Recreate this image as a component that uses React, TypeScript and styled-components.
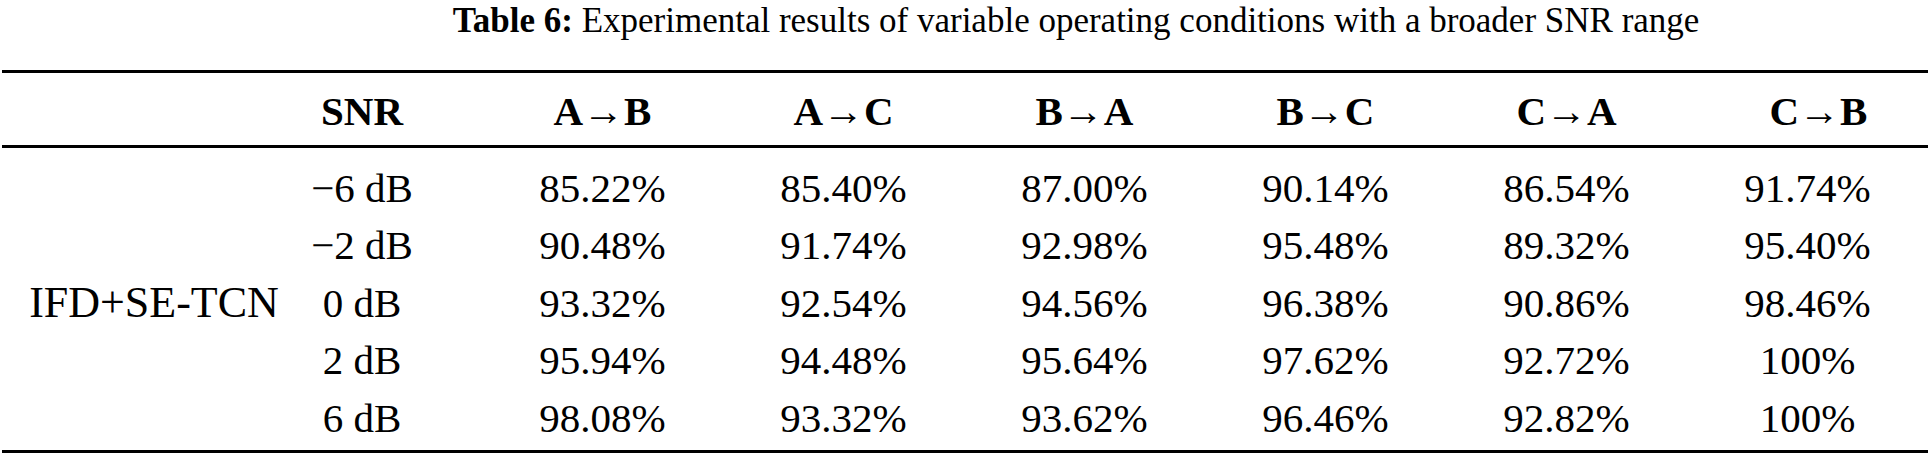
import React from "react";
import styled, { createGlobalStyle } from "styled-components";

const Global = createGlobalStyle`
  html, body { margin: 0; padding: 0; background: #ffffff; }
  body { font-family: "Liberation Serif", "Times New Roman", serif; color: #000; }
`;

const Page = styled.div`
  width: 1930px;
  height: 455px;
  padding: 0 2px;
  box-sizing: border-box;
  overflow: hidden;
`;

const Caption = styled.div`
  height: 42px;
  line-height: 42px;
  font-size: 35px;
  text-align: center;
  padding-left: 222px;
  margin-bottom: 28px;
  white-space: nowrap;
`;

const CaptionLabel = styled.span`
  font-weight: bold;
`;

const Rule = styled.div`
  height: 3px;
  background: #000;
`;

const Grid = styled.div<{ $head?: boolean }>`
  display: grid;
  grid-template-columns: 300px 180px repeat(6, 1fr);
  grid-auto-rows: ${(p) => (p.$head ? "68px" : "57.5px")};
  padding: ${(p) => (p.$head ? "4px 0 0" : "11px 0 3px")};
  font-size: 41px;
`;

const Cell = styled.div<{ $bold?: boolean; $snr?: boolean; $shift?: number }>`
  display: flex;
  align-items: center;
  justify-content: center;
  font-weight: ${(p) => (p.$bold ? "bold" : "normal")};
  padding-right: ${(p) => (p.$snr ? "60px" : "0")};
  padding-left: ${(p) => (p.$shift ? `${p.$shift}px` : "0")};
  white-space: nowrap;
`;

const Method = styled(Cell)`
  grid-row: span 5;
  font-size: 44px;
  padding-left: 4px;
`;

const headers = ["A→B", "A→C", "B→A", "B→C", "C→A", "C→B"];

const rows: { snr: string; values: string[] }[] = [
  { snr: "−6 dB", values: ["85.22%", "85.40%", "87.00%", "90.14%", "86.54%", "91.74%"] },
  { snr: "−2 dB", values: ["90.48%", "91.74%", "92.98%", "95.48%", "89.32%", "95.40%"] },
  { snr: "0 dB", values: ["93.32%", "92.54%", "94.56%", "96.38%", "90.86%", "98.46%"] },
  { snr: "2 dB", values: ["95.94%", "94.48%", "95.64%", "97.62%", "92.72%", "100%"] },
  { snr: "6 dB", values: ["98.08%", "93.32%", "93.62%", "96.46%", "92.82%", "100%"] },
];

export default function App() {
  return (
    <>
      <Global />
      <Page>
        <Caption>
          <CaptionLabel>Table 6:</CaptionLabel> Experimental results of variable operating conditions with a
          broader SNR range
        </Caption>
        <Rule />
        <Grid $head>
          <Cell />
          <Cell $bold $snr>SNR</Cell>
          {headers.map((h, i) => (
            <Cell key={h} $bold $shift={i === headers.length - 1 ? 22 : 0}>
              {h}
            </Cell>
          ))}
        </Grid>
        <Rule />
        <Grid>
          {rows.map((r, i) => (
            <React.Fragment key={r.snr}>
              {i === 0 && <Method>IFD+SE-TCN</Method>}
              <Cell $snr>{r.snr}</Cell>
              {r.values.map((v, j) => (
                <Cell key={j}>{v}</Cell>
              ))}
            </React.Fragment>
          ))}
        </Grid>
        <Rule />
      </Page>
    </>
  );
}
